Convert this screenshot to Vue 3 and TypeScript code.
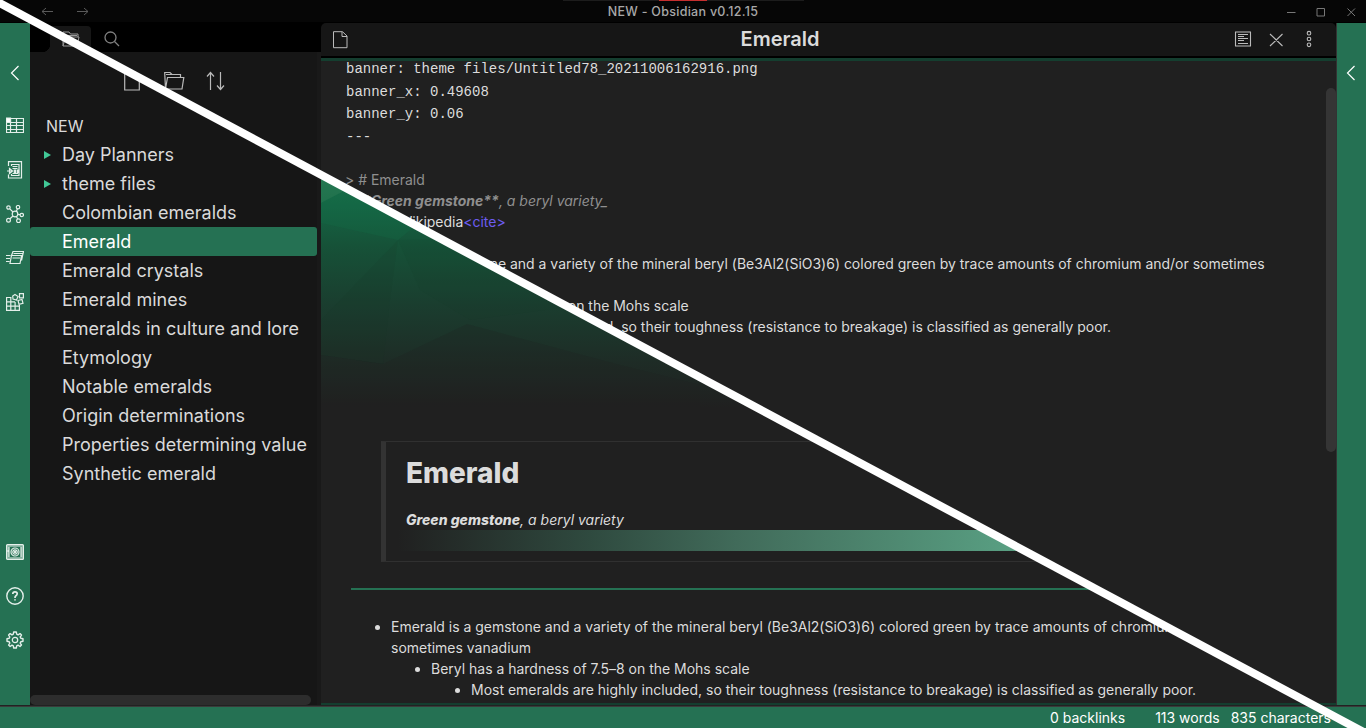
<script setup lang="ts">
const folders: string[] = ['Day Planners', 'theme files']
const notes: string[] = [
  'Colombian emeralds',
  'Emerald',
  'Emerald crystals',
  'Emerald mines',
  'Emeralds in culture and lore',
  'Etymology',
  'Notable emeralds',
  'Origin determinations',
  'Properties determining value',
  'Synthetic emerald',
]
const active = 'Emerald'
</script>

<template>
  <div class="app">
    <header class="titlebar">
      <svg class="history" width="50" height="12" viewBox="0 0 50 12">
        <path d="M1 5.500H12M5 2L1 5.500L5 9M36 5.500H47M43 2L47 5.500L43 9" />
      </svg>
      <div class="loader"><i></i></div>
      <span class="window-title">NEW - Obsidian v0.12.15</span>
      <svg class="controls" width="72" height="12" viewBox="0 0 72 12">
        <path d="M1 6.500H9.500M31 2.500H38.500V10H31ZM61.500 2.500L69 10M69 2.500L61.500 10" />
      </svg>
    </header>

    <div class="workspace">
      <nav class="ribbon">
        <svg class="chevron" width="10" height="16" viewBox="0 0 10 16"><path d="M8.500 1L1.500 8L8.500 15" /></svg>
        <div class="actions">
          <svg viewBox="0 0 18 18">
            <path d="M.5 1.500H17.500V15.500H.5ZM.5 5.500H17.500M.5 8.500H17.500M.5 12.500H17.500M4.500 2V16M10.500 2V16" />
            <path class="fill" d="M0 1H4.500V5.500H0Z" />
          </svg>
          <svg viewBox="0 0 18 18">
            <path d="M2.500 5V.7H15.500V17H2.500V13.500M5.500 5V3.500H13V14.500H5.500V13M6.500 5.500H11.500M6.500 7.500H11.500M6.500 12.500H12M1 10H6M3.500 7.500L6.500 10L3.500 12.500Z" />
            <path d="M8.300 9H9.500V11.500H8.300ZM11.300 9H12.500V11.500H11.300Z" />
          </svg>
          <svg viewBox="0 0 18 18">
            <circle cx="9" cy="9" r="2.800" /><circle cx="2.500" cy="2.500" r="1.700" /><circle cx="12" cy="2.200" r="1.700" />
            <circle cx="15.800" cy="10" r="1.700" /><circle cx="2.500" cy="15.200" r="1.900" /><circle cx="12.500" cy="15.800" r="1.900" />
            <path d="M3.800 3.800L7 7M11.500 3.800L10.200 6.500M11.800 9.400L14 9.700M4 13.800L7 11M10.300 11.300L11.700 14" />
          </svg>
          <svg viewBox="0 0 18 18">
            <path d="M5.500 6.500H15.500L14 14.500H4ZM5.500 6.500L7 2.500H17.500L15.500 11.500M7.500 4.500H16.500M6.500 9H14M0 6.500H4.500M0 9.500H4M0 12.500H3.500" />
          </svg>
          <svg viewBox="0 0 18 18">
            <path d="M.6 4.500H5.500M.6 4V17.400H13.400V12M.6 8.800H9M.6 13.100H13.400M4.800 4.500V17M9.100 9V17M13.500 .6H17.400V4.800H13.500ZM9 1.500L12 3.500L10.500 7L7 6L6.700 3ZM12 7.500L16 6.500L17 10.300L13 11.300Z" />
          </svg>
        </div>
        <div class="settings">
          <svg viewBox="0 0 18 18">
            <rect class="soft" x="1.500" y="2.500" width="15" height="13" rx="1" />
            <rect x=".6" y="1.600" width="16.800" height="14.800" rx="1" />
            <path d="M3 4V14M15 4V14M2 7V9" />
            <circle class="back" cx="9" cy="9" r="4" /><circle cx="9" cy="9" r="2.200" /><circle cx="9" cy="9" r=".6" />
          </svg>
          <svg viewBox="0 0 18 18">
            <circle class="ring" cx="9" cy="9" r="8.200" />
            <path class="bold" d="M6.800 7Q6.800 4.800 9 4.800Q11.200 4.800 11.200 6.800Q11.200 8 9.700 9Q9 9.500 9 11M9 12.300V13.600" />
          </svg>
          <svg viewBox="0 0 18 18">
            <path class="gear" d="M7.700 1H10.300L10.700 3.200L12.100 3.800L14 2.600L15.500 4.100L14.200 6L14.800 7.300L17 7.700V10.300L14.800 10.700L14.200 12.100L15.500 14L14 15.500L12.100 14.200L10.700 14.800L10.300 17H7.700L7.300 14.800L6 14.200L4.100 15.500L2.600 14L3.800 12.100L3.200 10.700L1 10.300V7.700L3.200 7.300L3.800 6L2.600 4.100L4.100 2.600L6 3.800L7.300 3.200Z" />
            <circle cx="9" cy="9" r="2.700" />
          </svg>
        </div>
      </nav>

      <aside class="sidebar">
        <div class="tabs">
          <div class="tab-gap"></div>
          <div class="tab">
            <svg width="18" height="16" viewBox="0 0 18 16"><path d="M1 15V1H7L8.500 3H16V6M1 15L3.500 6H17L15 15ZM3 4.500H15" /></svg>
          </div>
          <svg class="search" width="16" height="16" viewBox="0 0 16 16"><circle cx="6.500" cy="6.500" r="5.500" /><path d="M10.500 10.500L15 15" /></svg>
        </div>
        <div class="tools">
          <svg width="16" height="20" viewBox="0 0 16 20"><path d="M.7 1H11L15.300 5V19H.7Z" /></svg>
          <svg width="21" height="20" viewBox="0 0 21 20"><path d="M1.500 18L.7 1.500H6L8 3.500H16.500V6M1.500 18L3.500 6.500H19.800L18 18ZM2 3.500H8" /></svg>
          <svg width="19" height="20" viewBox="0 0 19 20"><path d="M4.500 19V2M1 5.500L4.500 1.500L8 5.500M14.500 1V18M11 14.500L14.500 18.500L18 14.500" /></svg>
        </div>
        <div class="tree">
          <div class="row root">NEW</div>
          <div v-for="f in folders" :key="f" class="row folder">{{ f }}</div>
          <div v-for="n in notes" :key="n" class="row" :class="{ active: n === active }">{{ n }}</div>
        </div>
        <div class="hscroll"></div>
      </aside>

      <main class="pane">
        <div class="pane-head">
          <svg width="16" height="18" viewBox="0 0 16 18"><path d="M1.500 .7H10.500L15 5V16.700H1.500ZM10 1V5.500H15" /></svg>
          <h1>Emerald</h1>
          <svg class="view-actions" width="84" height="20" viewBox="0 0 84 20">
            <path d="M1.500 2H16.500V16H1.500ZM4 4.500H14M4 6.500H10M4 8.500H14M4 10.500H10M4 13.500H14M36 4L48.500 16M48.500 4L36 16" />
            <circle cx="75" cy="3.200" r="1.800" /><circle cx="75" cy="9" r="1.800" /><circle cx="75" cy="14.800" r="1.800" />
          </svg>
        </div>

        <div class="split">
          <section class="source">
            <div class="code"><p>banner: theme files/Untitled78_20211006162916.png</p><p>banner_x: 0.49608</p><p>banner_y: 0.06</p><p>---</p></div>
            <div class="md">
              <p class="dim">&gt; # Emerald</p>
              <p class="dim emph"><em>_<b>**Green gemstone**</b>, a beryl variety_</em></p>
              <p class="cite">&gt; <span>&lt;cite&gt;</span>Wikipedia<span>&lt;cite&gt;</span></p>
              <div class="list">
                <p>- Emerald is a gemstone and a variety of the mineral beryl (Be3Al2(SiO3)6) colored green by trace amounts of chromium and/or sometimes vanadium</p>
                <p class="l2">- Beryl has a hardness of 7.5–8 on the Mohs scale</p>
                <p class="l3">- Most emeralds are highly included, so their toughness (resistance to breakage) is classified as generally poor.</p>
              </div>
            </div>
            <div class="vscroll"></div>
          </section>

          <section class="preview">
            <svg class="banner" width="1005" height="350" viewBox="321 61 1005 350">
              <defs>
                <linearGradient id="fade" gradientUnits="userSpaceOnUse" x1="0" y1="175" x2="0" y2="408">
                  <stop offset="0" stop-color="#1b704b" />
                  <stop offset=".12" stop-color="#156645" />
                  <stop offset=".3" stop-color="#165238" />
                  <stop offset=".55" stop-color="#1a3e2f" />
                  <stop offset=".8" stop-color="#1e2c26" />
                  <stop offset="1" stop-color="#202020" />
                </linearGradient>
              </defs>
              <rect x="321" y="61" width="1005" height="350" fill="url(#fade)" />
              <path d="M321 165L346 190L321 203Z" fill="#3a8c60" opacity=".3" />
              <path d="M321 203L346 190L430 214L398 240L321 223Z" fill="#147049" opacity=".25" />
              <path d="M398 240L430 239L500 239L620 300L470 320L420 290Z" fill="#173c2b" opacity=".1" />
              <path d="M398 240L321 320V355L383 364L390 300Z" fill="#1b3328" opacity=".13" />
              <path d="M321 355L383 364L467 324L620 365L700 385V411H321Z" fill="#20211f" opacity=".22" />
            </svg>
            <blockquote>
              <h2>Emerald</h2>
              <p><em><b>Green gemstone</b>, a beryl variety</em></p>
              <div class="bar"></div>
            </blockquote>
            <hr />
            <ul>
              <li>Emerald is a gemstone and a variety of the mineral beryl (Be3Al2(SiO3)6) colored green by trace amounts of chromium and/or<br />sometimes vanadium
                <ul>
                  <li>Beryl has a hardness of 7.5–8 on the Mohs scale
                    <ul>
                      <li>Most emeralds are highly included, so their toughness (resistance to breakage) is classified as generally poor.</li>
                    </ul>
                  </li>
                </ul>
              </li>
            </ul>
          </section>
        </div>
      </main>

      <nav class="ribbon right">
        <svg class="chevron" width="10" height="16" viewBox="0 0 10 16"><path d="M8.500 1L1.500 8L8.500 15" /></svg>
      </nav>
    </div>

    <footer class="status"><span>0 backlinks</span><span>113 words</span><span>835 characters</span></footer>

    <svg class="slash" width="1366" height="728" viewBox="0 0 1366 728"><path d="M-20 -7.500L1380 740.800" /></svg>
  </div>
</template>

<style>
html,
body {
  background: #202020;
  overflow: hidden;
}
</style>

<style scoped>
* { box-sizing: border-box; }
.app {
  position: relative;
  width: 1366px;
  height: 728px;
  overflow: hidden;
  display: flex;
  flex-direction: column;
  background: #000;
  color: #dcdcdc;
  font-family: Inter, "Liberation Sans", sans-serif;
}
svg { display: block; fill: none; stroke: currentColor; stroke-width: 1; flex: none; }
p, h1, h2, ul { margin: 0; padding: 0; }

.titlebar {
  position: relative;
  height: 22px;
  flex: none;
  display: flex;
  align-items: center;
  justify-content: space-between;
  padding: 2px 8px 0 41px;
  background: #060606;
}
.history { color: #5a5a5a; }
.controls { color: #777; }
.window-title {
  position: absolute;
  left: 0;
  right: 0;
  top: 4px;
  text-align: center;
  font-size: 12.500px;
  line-height: 16px;
  font-weight: 500;
  letter-spacing: 0.28px;
  color: #a8a8a8;
}
.loader { position: absolute; left: 563px; top: 0; width: 241px; height: 1px; background: #1c1c1c; }
.loader i { display: block; width: 48px; height: 1px; margin-left: 96px; background: #c62f2f; }

.workspace { display: flex; height: 684px; flex: none; padding-top: 1px; border-bottom: 1px solid #222; }
.ribbon {
  width: 30px;
  flex: none;
  display: flex;
  flex-direction: column;
  align-items: center;
  padding-top: 42px;
  background: #257153;
  color: #e4efea;
}
.ribbon.right { border-left: 1px solid #333; padding-right: 1px; }
.chevron { color: #fff; stroke-width: 1.2; }
.actions { display: flex; flex-direction: column; gap: 26px; margin-top: 36px; }
.settings { display: flex; flex-direction: column; gap: 26px; margin: auto 0 56px; }
.actions svg, .settings svg { width: 18px; height: 18px; stroke-width: 1.2; }
.fill { fill: #fff; }
.soft { stroke-width: 3; opacity: 0.5; }
.back { fill: #257153; }
.ring { stroke-width: 1.4; }
.bold { stroke-width: 1.7; }
.gear { stroke-width: 1.4; stroke-linejoin: round; }

.sidebar {
  width: 291px;
  flex: none;
  display: flex;
  flex-direction: column;
  background: linear-gradient(90deg, #161616 287px, #191919 287px);
}
.tabs { display: flex; height: 29px; background: #000; padding-top: 3px; flex: none; }
.tab-gap {
  width: 20px;
  margin-top: -3px;
  background:
    radial-gradient(circle at 12px 21px, #000 8px, transparent 8.5px),
    linear-gradient(#000, #000) 0 0 / 12px 29px no-repeat,
    linear-gradient(#000, #000) 0 0 / 20px 21px no-repeat,
    #161616;
}
.tab { width: 41px; background: #161616; border-radius: 3px 4px 0 0; padding: 5px 0 0 12px; color: #999; }
.search { margin: 4.500px 0 0 13px; color: #808080; stroke-width: 1.3; }
.tools { display: flex; height: 60px; flex: none; padding: 19px 0 0 94px; color: #b9b9b9; }
.tools svg { stroke-width: 1.2; }
.tools svg:nth-child(2) { margin-left: 24px; }
.tools svg:nth-child(3) { margin-left: 21px; }
.row { position: relative; height: 29px; line-height: 29px; padding-left: 32px; margin-right: 4px; border-radius: 3px; font-size: 18px; color: #dadada; white-space: nowrap; }
.root { padding-left: 16px; height: 28px; font-size: 16px; }
.folder::before {
  content: "";
  position: absolute;
  left: 14px;
  top: 10.500px;
  border-left: 7px solid #41c896;
  border-top: 4px solid transparent;
  border-bottom: 4px solid transparent;
}
.active { background: #257153; color: #fff; }
.hscroll { width: 281px; height: 10px; margin-top: auto; border-radius: 5px; background: #2d2d2d; }

.pane { width: 1015px; flex: none; display: flex; flex-direction: column; }
.pane-head {
  height: 33px;
  flex: none;
  display: flex;
  align-items: center;
  justify-content: space-between;
  padding: 0 18px 0 11px;
  background: #161616;
  border-radius: 5px 5px 0 0;
  position: relative;
  color: #bbb;
}
.pane-head h1 { position: absolute; left: 0; right: 97px; top: 1px; text-align: center; font-size: 20px; line-height: 30px; font-weight: 600; color: #dcdcdc; }
.view-actions { stroke-width: 1.1; }
.split { display: grid; height: 647px; margin-top: 2px; border-top: 3px solid #143e2f; border-bottom: 2px solid #143e2f; background: #202020; overflow: hidden; }
.source, .preview { grid-area: 1 / 1; height: 642px; overflow: hidden; position: relative; font-size: 14px; line-height: 21px; }
.source { clip-path: polygon(0 0, 1015px 0, 1015px 656px, 0 114px); padding-left: 25px; }
.preview { clip-path: polygon(0 114px, 1015px 656px, 1015px 800px, 0 800px); }
.code { font-family: "Courier New", "Liberation Mono", monospace; font-size: 14px; line-height: 22.700px; margin-top: -3px; }
.md { margin-top: 20px; white-space: nowrap; letter-spacing: -0.015px; }
.dim { color: #8f8f8f; margin-left: -1px; }
.emph { margin-left: 3px; }
.cite { margin-left: -2px; }
.cite span { color: #6d5cf0; }
.list { margin-top: 21px; white-space: normal; width: 925px; }
.l2 { padding-left: 14px; }
.l3 { padding-left: 30px; white-space: nowrap; }
.vscroll { position: absolute; right: 0; top: 27px; width: 10px; height: 364px; border-radius: 5px; background: #353535; }

.banner { stroke: none; height: 350px; }
blockquote { height: 121px; margin: 30px 80px 0 60px; padding: 10px 20px; border: 1px solid #303030; border-left: 5px solid #333; }
blockquote h2 { font-size: 28px; line-height: 42px; font-weight: 800; }
blockquote p { margin-top: 15px; }
blockquote b { font-weight: 800; }
.bar { height: 21px; margin-left: -8px; width: 640px; background: linear-gradient(90deg, #202020, #2f4a3f 30%, #416b5a 53%, #5ba486); }
hr { border: 0; height: 2px; margin: 26px 0 26px 30px; background: #257153; }
ul { list-style: none; padding-left: 40px; white-space: nowrap; }
.preview > ul { padding-left: 70px; letter-spacing: -0.01px; }
li { position: relative; }
li::before { content: ""; position: absolute; left: -16px; top: 9px; width: 5px; height: 5px; border-radius: 50%; background: #dcdcdc; }

.status { height: 22px; display: flex; justify-content: flex-end; padding-right: 35px; background: #257153; border-top: 1px solid #3a3a3a; font-size: 14px; line-height: 22px; color: #fff; }
.status span:nth-child(2) { margin: 0 11px 0 30px; }
.slash { position: absolute; inset: 0; stroke: #fff; stroke-width: 8; }
</style>
